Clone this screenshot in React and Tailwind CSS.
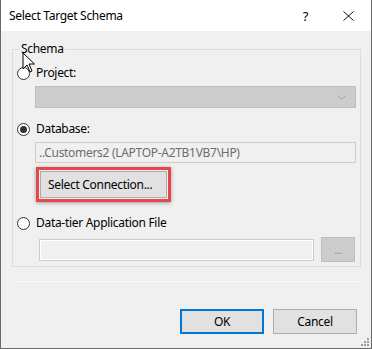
import React from "react";

function Radio({ checked, label }) {
  return (
    <div className="flex items-center h-[16px] pl-[4px]">
      <span className="w-[13px] h-[13px] rounded-full border border-[#333333] bg-white flex items-center justify-center shrink-0">
        {checked && <span className="w-[7px] h-[7px] rounded-full bg-[#333333]" />}
      </span>
      <span className="ml-[6px] leading-[16px] text-black">{label}</span>
    </div>
  );
}

export default function App() {
  return (
    <div className="relative w-[372px] h-[349px] flex flex-col bg-[#f0f0f0] border-x border-b border-[#6a6a6a] text-[12px] tracking-[-0.3px] text-black font-['Noto_Sans',sans-serif] overflow-hidden">
      {/* title bar */}
      <div className="h-[31px] bg-white flex items-center pl-[8px] shrink-0">
        <span className="leading-[16px]">Select Target Schema</span>
        <span className="ml-auto text-[13px] leading-[16px]">?</span>
        <svg className="ml-[35px] mr-[17px]" width="11" height="10" viewBox="0 0 11 10">
          <path d="M0.5 0.5 L10.5 9.5 M10.5 0.5 L0.5 9.5" stroke="#111" strokeWidth="1" fill="none" />
        </svg>
      </div>

      {/* body */}
      <fieldset className="mt-[11px] ml-[11px] w-[349px] border border-[#dcdcdc] p-0 pb-[4px] m-0">
        <legend className="ml-[7px] px-px leading-[14px]">Schema</legend>

        <div className="mt-[9px]">
          <Radio label="Project:" />
        </div>
        <div className="mt-[5px] ml-[22px] w-[321px] h-[22px] bg-[#cccccc] border border-[#bfbfbf] flex items-center justify-end pr-[9px]">
          <svg width="9" height="5" viewBox="0 0 9 5">
            <path d="M0.5 0.5 L4.5 4.5 L8.5 0.5" stroke="#a2a2a2" strokeWidth="1" fill="none" />
          </svg>
        </div>

        <div className="mt-[13px]">
          <Radio label="Database:" checked />
        </div>
        <div className="mt-[5px] ml-[22px] w-[321px] h-[21px] bg-[#f0f0f0] border border-[#cccccc] flex items-center pl-[3px] text-[#6d6d6d] leading-[16px]">
          ..Customers2 (LAPTOP-A2TB1VB7\HP)
        </div>
        <div className="mt-[4px] ml-[23px] w-[135px] h-[35px] border-[3px] border-[#e8474a] p-px shadow-[0_1px_4px_rgba(0,0,0,0.35)]">
          <div className="w-full h-full bg-[#e1e1e1] border border-[#adadad] flex items-center pl-[7px] leading-[16px]">
            Select Connection...
          </div>
        </div>

        <div className="mt-[13px]">
          <Radio label="Data-tier Application File" />
        </div>
        <div className="mt-[6px] h-[25px] flex items-center">
          <div className="ml-[26px] w-[275px] h-[22px] bg-[#f0f0f0] border border-[#cccccc] shadow-[inset_0_0_0_1px_#ffffff]" />
          <div className="ml-[7px] w-[34px] h-[25px] bg-[#cccccc] border border-[#bfbfbf] flex items-center justify-center text-[#8a8a8a] text-[10px] leading-[10px]">
            ...
          </div>
        </div>
      </fieldset>

      <div className="mt-[14px] ml-[13px] w-[345px] h-px bg-[#fbfbfb]" />

      <div className="mt-[27px] flex justify-end gap-[9px] pr-[14px]">
        <button className="w-[84px] h-[25px] bg-[#e1e1e1] border-2 border-[#0078d7] leading-[16px]">OK</button>
        <button className="w-[84px] h-[25px] bg-[#e1e1e1] border border-[#adadad] leading-[16px]">Cancel</button>
      </div>

      {/* resize grip */}
      <svg className="absolute right-[1px] bottom-[1px]" width="10" height="10" viewBox="0 0 10 10">
        <g fill="#a0a0a0">
          <rect x="7" y="1" width="2" height="2" />
          <rect x="4" y="4" width="2" height="2" />
          <rect x="7" y="4" width="2" height="2" />
          <rect x="1" y="7" width="2" height="2" />
          <rect x="4" y="7" width="2" height="2" />
          <rect x="7" y="7" width="2" height="2" />
        </g>
      </svg>

      {/* mouse cursor */}
      <svg className="absolute left-[21px] top-[52px] pointer-events-none" width="14" height="22" viewBox="0 0 14 22">
        <path d="M1 1 L1 17 L5 13 L8 20 L10 19 L7 12 L12.5 12 Z" fill="#ffffff" stroke="#000000" strokeWidth="1" strokeLinejoin="miter" />
      </svg>
    </div>
  );
}
